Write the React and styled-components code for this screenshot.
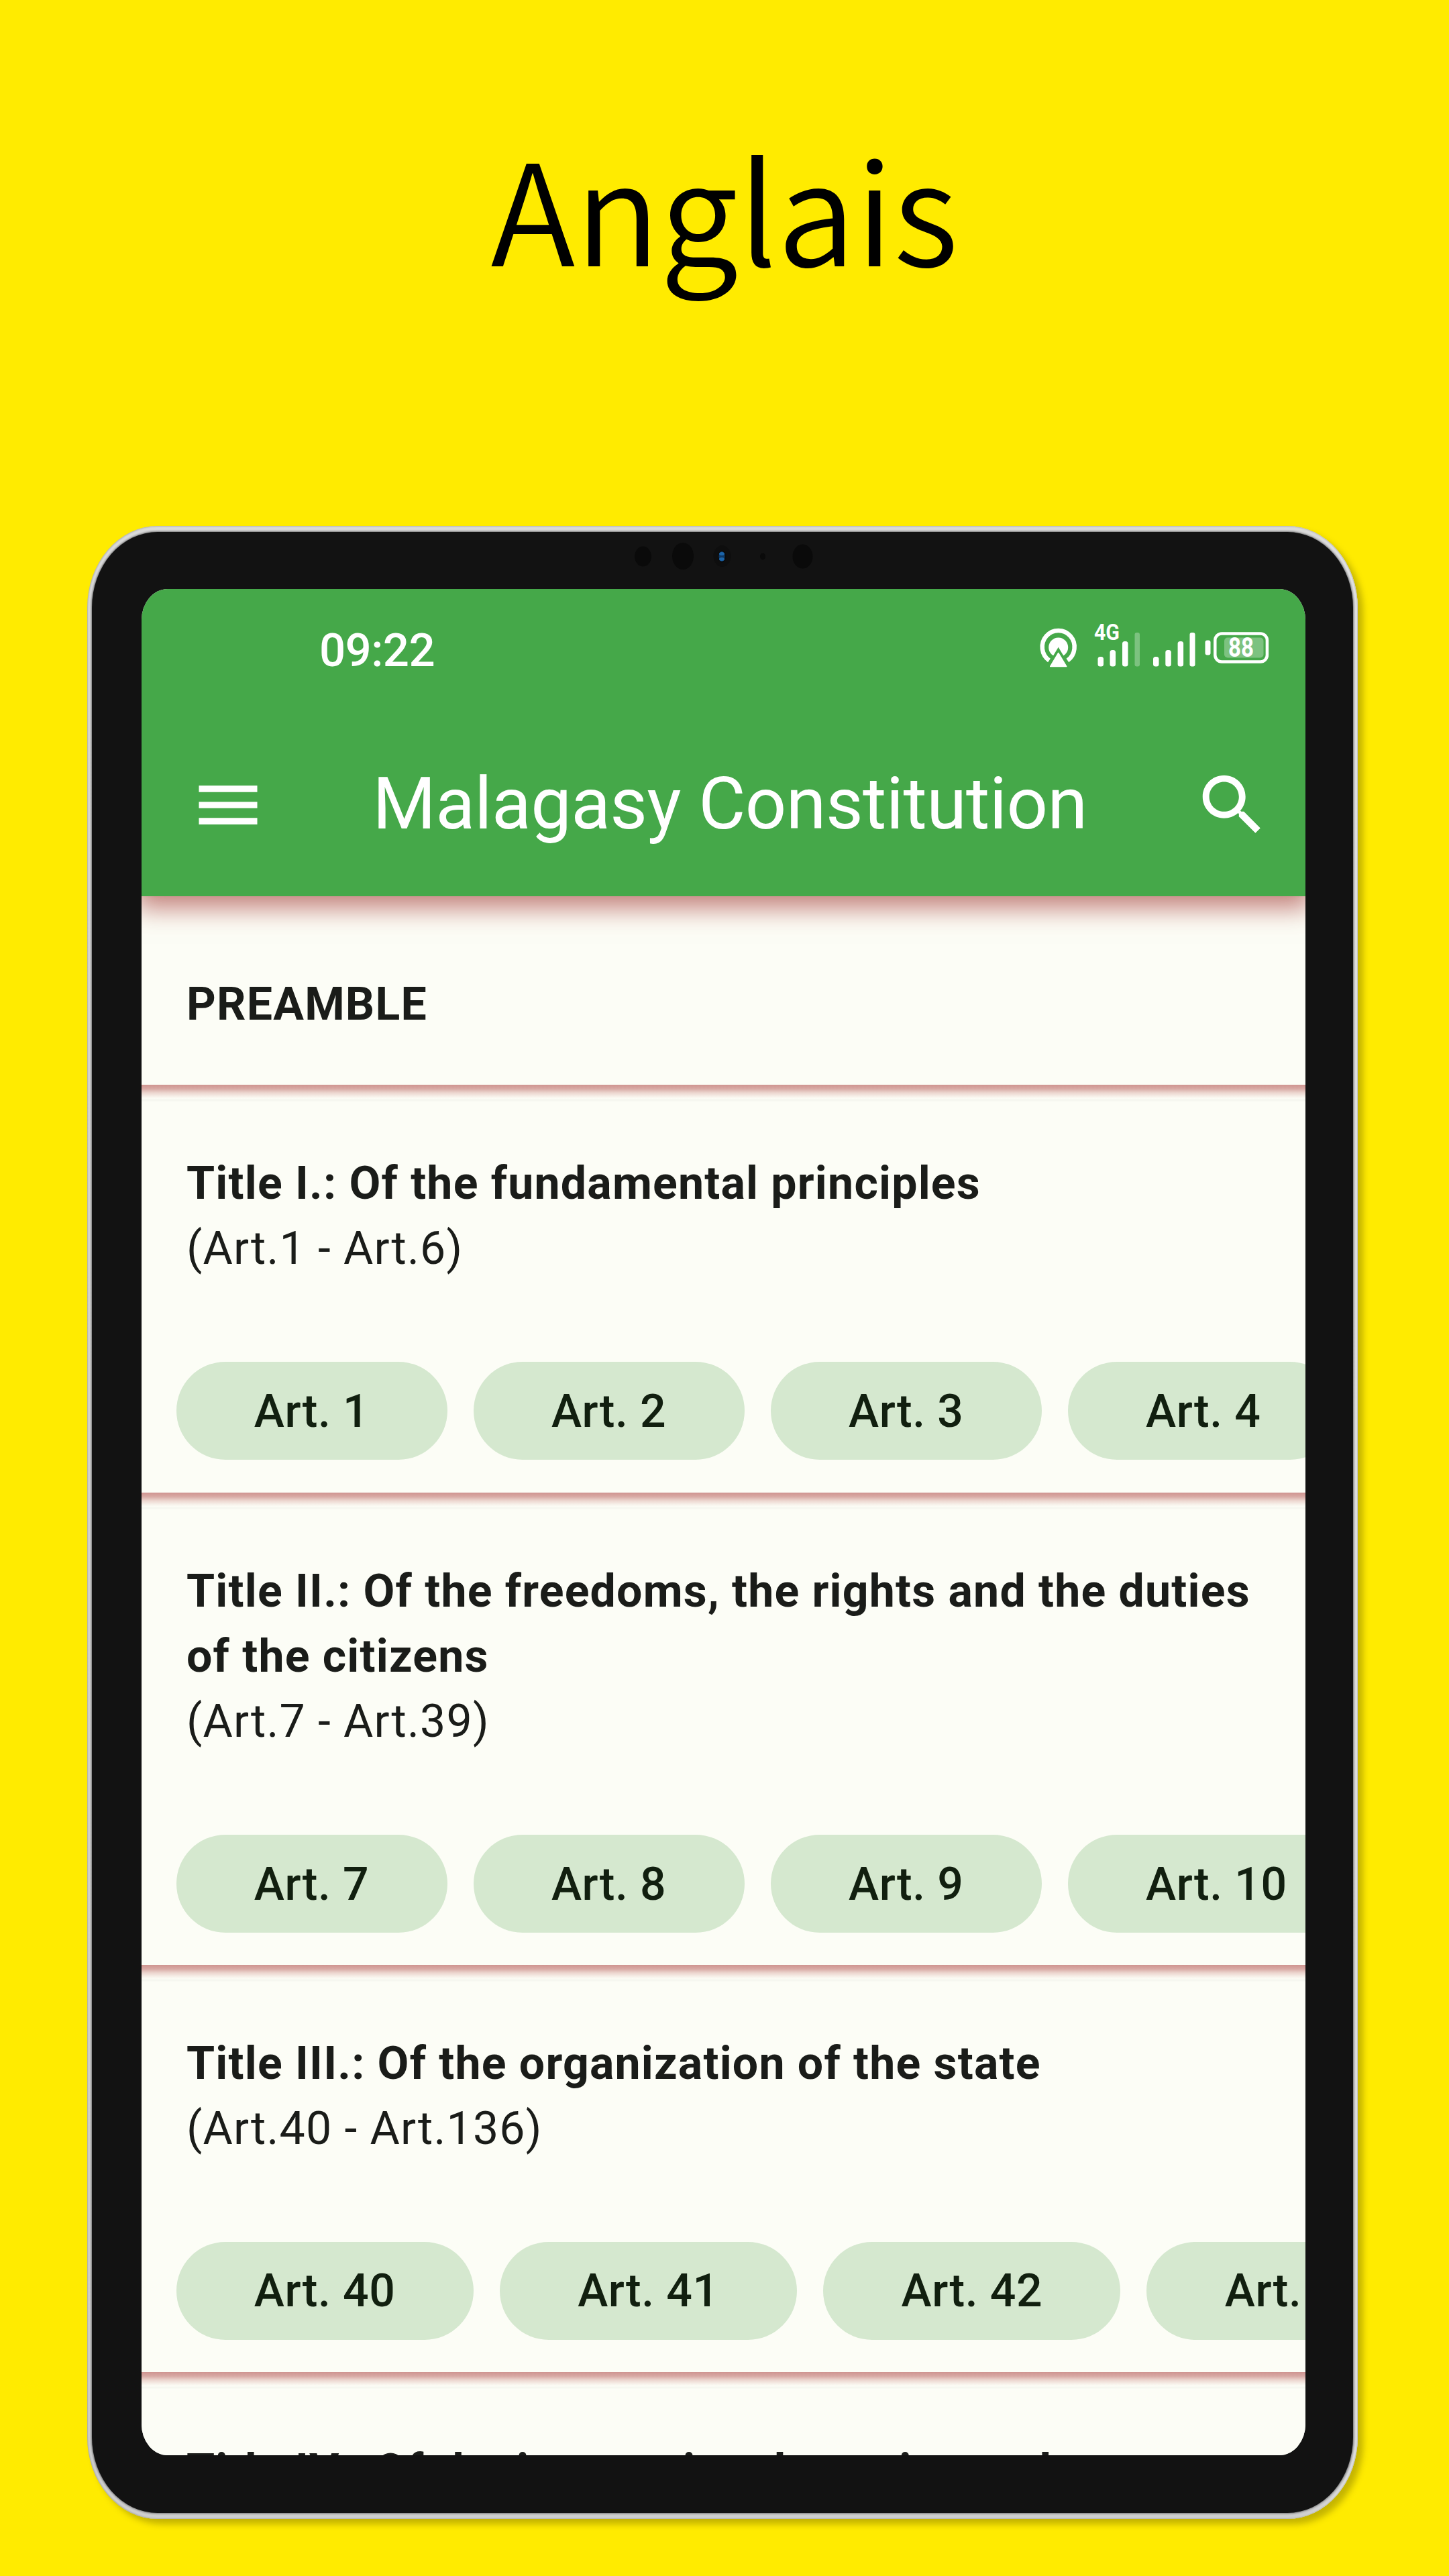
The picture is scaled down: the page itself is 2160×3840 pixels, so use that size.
import React from "react";
import styled, { createGlobalStyle } from "styled-components";

const GlobalStyle = createGlobalStyle`
  html, body { margin: 0; padding: 0; background: #ffeb00; }
  * { box-sizing: border-box; }
`;

const Poster = styled.main`
  width: 2160px;
  height: 3840px;
  overflow: hidden;
  background: #ffeb00;
  display: flex;
  flex-direction: column;
  font-family: Roboto, "Noto Sans", sans-serif;
`;

const Headline = styled.h1`
  margin: 0;
  height: 784px;
  padding-top: 152px;
  text-align: center;
  font-family: "Noto Sans CJK SC", "Noto Sans", sans-serif;
  font-weight: 350;
  font-size: 209px;
  line-height: 308px;
  color: #000;
`;

const Tablet = styled.section`
  position: relative;
  width: 1894px;
  height: 2971px;
  margin-left: 130px;
  padding: 9px 7px;
  border-radius: 105px / 122px;
  background: linear-gradient(#dadada, #cfcfcf);
  box-shadow: inset 0 0 2px 1px rgba(90, 90, 90, 0.35), inset -3px 0 3px #eee,
    8px 8px 10px rgba(90, 80, 0, 0.35);
`;

const Bezel = styled.div`
  width: 100%;
  height: 100%;
  padding: 85px 71px 86px 74px;
  border-radius: 98px / 113px;
  background: #121212;
  box-shadow: 0 0 3px 1px #6e6e6e;
`;

const Sensors = styled.svg`
  position: absolute;
  left: 810px;
  top: 20px;
`;

const Screen = styled.div`
  width: 100%;
  height: 100%;
  overflow: hidden;
  border-radius: 39px / 46px;
  background: #fcfdf6;
  display: flex;
  flex-direction: column;
`;

const Header = styled.header`
  position: relative;
  flex: none;
  height: 458px;
  background: #45a849;
  color: #fff;
  box-shadow: 0 9px 36px 8px rgba(163, 58, 53, 0.65);
`;

const StatusBar = styled.div`
  height: 182px;
  padding: 0 52px 0 265px;
  display: flex;
  justify-content: space-between;
  align-items: center;
`;

const Clock = styled.span`
  padding-top: 1px;
  font-size: 69px;
  font-weight: 500;
  line-height: 80px;
  letter-spacing: -0.6px;
`;

const TitleBar = styled.div`
  height: 276px;
  padding: 3px 50px 0 71px;
  display: flex;
  align-items: center;
`;

const AppTitle = styled.h2`
  flex: 1;
  margin: 0;
  padding-bottom: 3px;
  text-align: center;
  font-size: 108px;
  font-weight: 400;
  line-height: 136px;
  letter-spacing: -0.6px;
`;

const Section = styled.article`
  flex: none;
  height: ${(p) => p.$height}px;
  overflow: hidden;
  color: #1a1c19;
  background: ${(p) =>
    p.$ruled
      ? "linear-gradient(#cf9490 0, #d8a9a4 6px, #ecd6cf 12px, #f8f3ec 18px, #fcfdf6 21px, #f6f7f0 22px, #f6f7f0 24px, #fcfdf6 25px)"
      : "transparent"};
`;

const Heading = styled.div`
  padding: ${(p) => p.$top}px 60px 0 67px;
  font-size: 68px;
  line-height: 97.2px;
  letter-spacing: 1.2px;
`;

const Strong = styled.div`
  font-weight: 700;
  white-space: pre-line;
`;

const Chips = styled.div`
  margin-top: 120px;
  padding-left: 51.5px;
  display: flex;
  gap: 39px;
`;

const Chip = styled.button`
  flex: none;
  height: 146px;
  border: 0;
  padding: 1px 116.3px 0;
  border-radius: 73px;
  background: #d5e8cf;
  color: #111f0f;
  font-family: inherit;
  font-size: 68px;
  font-weight: 500;
  letter-spacing: 0.6px;
`;

const MenuIcon = () => (
  <svg width="116" height="116" viewBox="0 0 24 24" fill="#fff">
    <path d="M3 18h18v-2H3v2zm0-5h18v-2H3v2zm0-7v2h18V6H3z" />
  </svg>
);

const SearchIcon = () => (
  <svg width="118" height="118" viewBox="0 0 24 24" fill="#fff">
    <path d="M15.5 14h-.79l-.28-.27C15.41 12.59 16 11.11 16 9.5 16 5.91 13.09 3 9.5 3S3 5.91 3 9.5 5.91 16 9.5 16c1.61 0 3.09-.59 4.23-1.57l.27.28v.79l5 4.99L20.49 19l-4.99-5zm-6 0C7.01 14 5 11.99 5 9.5S7.01 5 9.5 5 14 7.01 14 9.5 11.99 14 9.5 14z" />
  </svg>
);

const SmallText = styled.text`
  font-family: Roboto, sans-serif;
  font-weight: 700;
`;

const StatusIcons = () => (
  <svg width="350" height="84" viewBox="1545 927 350 84" fill="#fff">
    <path d="M1565 984.500a24 24.500 0 1 1 27.400 0" fill="none" stroke="#fff" strokeWidth="6.500" />
    <circle cx="1578.700" cy="965" r="14.500" />
    <path d="M1578.700 972.500l13 21.500h-26z" stroke="#45a849" strokeWidth="8" />
    <path d="M1578.700 973.500l12 20h-24z" stroke="#fff" strokeWidth="1.500" strokeLinejoin="round" />
    <SmallText x="1632" y="954" fontSize="33.500" textLength="38" lengthAdjust="spacingAndGlyphs">4G</SmallText>
    <rect x="1637.500" y="979" width="8.500" height="14.500" rx="3.500" />
    <rect x="1655.500" y="969" width="8.500" height="24.500" rx="3.500" />
    <rect x="1674" y="956" width="8.500" height="37.500" rx="3.500" />
    <rect x="1692.500" y="943" width="7.500" height="50.500" rx="3" opacity=".3" />
    <rect x="1720" y="979" width="8.500" height="14.500" rx="3.500" />
    <rect x="1738.300" y="969" width="8.500" height="24.500" rx="3.500" />
    <rect x="1756.600" y="956" width="8.500" height="37.500" rx="3.500" />
    <rect x="1774.500" y="943" width="8" height="50.500" rx="3" />
    <rect x="1797.500" y="954.500" width="8" height="22" rx="3" />
    <rect x="1812.300" y="944.500" width="77.600" height="42" rx="10" fill="none" stroke="#fff" strokeWidth="4.500" />
    <rect x="1826" y="950.500" width="58.500" height="30" rx="5" opacity=".3" />
    <SmallText x="1832" y="979.300" fontSize="40" textLength="38" lengthAdjust="spacingAndGlyphs">88</SmallText>
  </svg>
);

const titles = [
  { name: "Title I.: Of the fundamental principles", range: "(Art.1 - Art.6)", arts: [1, 2, 3, 4], height: 607.5 },
  { name: "Title II.: Of the freedoms, the rights and the duties\nof the citizens", range: "(Art.7 - Art.39)", arts: [7, 8, 9, 10], height: 704 },
  { name: "Title III.: Of the organization of the state", range: "(Art.40 - Art.136)", arts: [40, 41, 42, 43], height: 607.5 },
  { name: "Title IV.: Of the international treaties and", range: "", arts: [], height: 300 },
];

export default function App() {
  return (
    <Poster>
      <GlobalStyle />
      <Headline>Anglais</Headline>
      <Tablet>
        <Bezel>
          <Screen>
            <Header>
              <StatusBar>
                <Clock>09:22</Clock>
                <StatusIcons />
              </StatusBar>
              <TitleBar>
                <MenuIcon />
                <AppTitle>Malagasy Constitution</AppTitle>
                <SearchIcon />
              </TitleBar>
            </Header>
            <Section $height={281}>
              <Heading $top={112.5}>
                <Strong>PREAMBLE</Strong>
              </Heading>
            </Section>
            {titles.map((t) => (
              <Section key={t.name} $height={t.height} $ruled>
                <Heading $top={99}>
                  <Strong>{t.name}</Strong>
                  {t.range}
                </Heading>
                <Chips>
                  {t.arts.map((n) => (
                    <Chip key={n}>Art. {n}</Chip>
                  ))}
                </Chips>
              </Section>
            ))}
          </Screen>
        </Bezel>
        <Sensors width="300" height="70" viewBox="940 804 300 70">
          <g fill="#0a0a0a">
            <ellipse cx="958.500" cy="829.500" rx="12.500" ry="15" />
            <ellipse cx="1018" cy="829" rx="16" ry="20" />
            <ellipse cx="1076.500" cy="829" rx="13" ry="16" fill="#0e0e0e" />
            <ellipse cx="1137" cy="829.500" rx="4" ry="5" />
            <ellipse cx="1196.500" cy="829.500" rx="15" ry="18" />
            <ellipse cx="1076.500" cy="829.500" rx="6" ry="9" />
          </g>
          <ellipse cx="1076" cy="829.500" rx="4.500" ry="7.500" fill="#0e3763" />
          <ellipse cx="1076" cy="825.500" rx="4" ry="2.500" fill="#1c64a8" />
          <ellipse cx="1076" cy="833.500" rx="4" ry="2.500" fill="#1c64a8" />
        </Sensors>
      </Tablet>
    </Poster>
  );
}
